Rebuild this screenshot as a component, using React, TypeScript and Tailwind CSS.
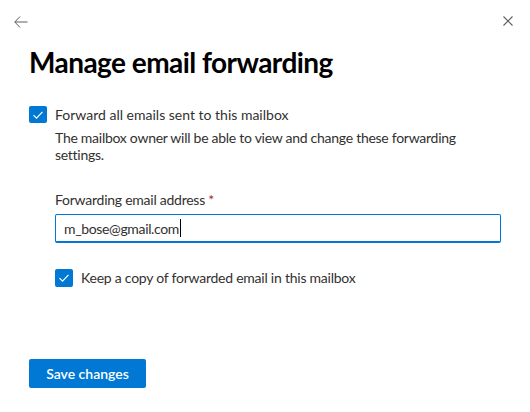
import React from "react";

const Check = () => (
  <svg width="12" height="10" viewBox="0 0 12 10" fill="none">
    <path d="M1.5 5.2 L4.5 8.2 L10.5 1.8" stroke="white" strokeWidth="1.2" />
  </svg>
);

export default function App() {
  return (
    <div
      className="w-[530px] h-[412px] bg-white text-[#323130] overflow-hidden"
      style={{ fontFamily: 'Lato, "Open Sans", sans-serif' }}
    >
      <div className="flex items-center justify-between h-[40px] pl-[14px] pr-[17px] pt-[2px]">
        <svg width="14" height="12" viewBox="0 0 14 12" fill="none" className="mt-[2px]">
          <path d="M6 0.5 L0.8 6 L6 11.5 M0.8 6 H13.5" stroke="#605e5c" strokeWidth="1" />
        </svg>
        <svg width="10" height="10" viewBox="0 0 10 10" fill="none">
          <path d="M0.5 0.5 L9.5 9.5 M9.5 0.5 L0.5 9.5" stroke="#605e5c" strokeWidth="1.1" />
        </svg>
      </div>
      <div className="pl-[29px] pr-[30px]">
        <h1 className="text-[28px] leading-[36px] font-bold text-black mt-[4px] tracking-[-0.55px]">
          Manage email forwarding
        </h1>
        <div className="mt-[26px] flex items-start gap-[8px]">
          <div className="w-[18px] h-[17px] bg-[#0078d4] rounded-[2px] flex items-center justify-center shrink-0">
            <Check />
          </div>
          <div className="text-[14px] leading-[18px]">
            <div>Forward all emails sent to this mailbox</div>
            <div className="mt-[5px] leading-[17px] tracking-[-0.27px]">
              The mailbox owner will be able to view and change these forwarding
              <br />
              settings.
            </div>
          </div>
        </div>
        <div className="pl-[26px]">
          <div className="mt-[27px] text-[14px] leading-[20px] tracking-[-0.25px]">
            Forwarding email address <span className="text-[#a4262c]">*</span>
          </div>
          <div className="mt-[4px] h-[29px] w-[446px] border border-[#0078d4] border-b-2 rounded-[2px] flex items-center px-[8px] text-[14px] tracking-[-0.35px]">
            <span>m_bose@gmail.com</span>
            <span className="inline-block w-[1px] h-[18px] bg-black ml-[1px]" />
          </div>
          <div className="mt-[25px] flex items-center gap-[8px]">
            <div className="w-[18px] h-[18px] bg-[#0078d4] rounded-[2px] flex items-center justify-center shrink-0">
              <Check />
            </div>
            <span className="text-[14px] leading-[20px] tracking-[-0.24px]">
              Keep a copy of forwarded email in this mailbox
            </span>
          </div>
        </div>
        <button className="mt-[71px] w-[117px] h-[29px] bg-[#0078d4] text-white rounded-[2px] text-[14px] font-semibold">
          Save changes
        </button>
      </div>
    </div>
  );
}
